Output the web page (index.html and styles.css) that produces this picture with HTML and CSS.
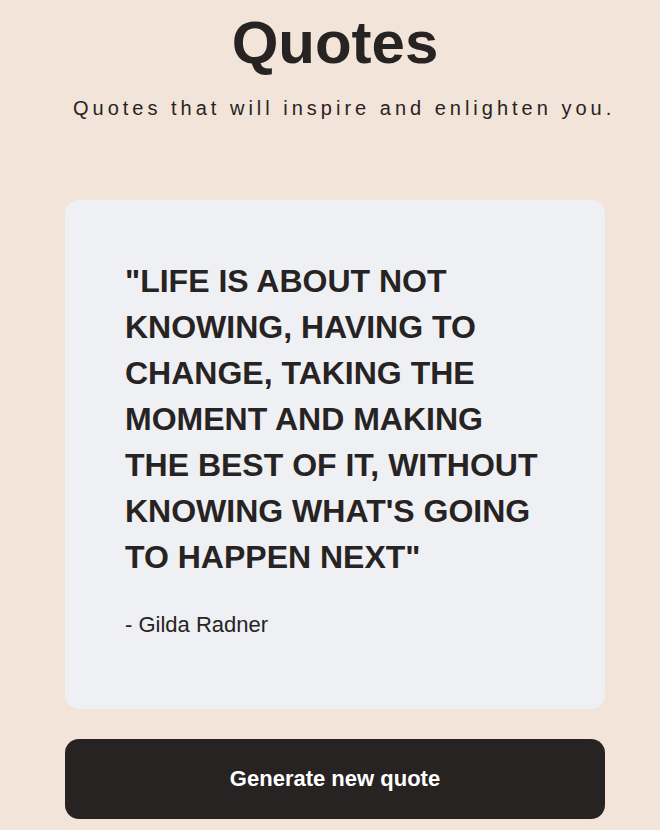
FILE: index.html
```html
<!DOCTYPE html>
<html lang="en">
<head>
  <meta charset="utf-8">
  <meta name="viewport" content="width=device-width, initial-scale=1">
  <title>Quotes</title>
  <link rel="stylesheet" href="styles.css">
</head>
<body>
  <main class="page">
    <header class="header">
      <h1 class="title">Quotes</h1>
      <p class="subtitle">Quotes that will inspire and enlighten you.</p>
    </header>
    <figure class="card">
      <blockquote class="quote">"Life is about not knowing, having to change, taking the moment and making the best of it, without knowing what's going to happen next"</blockquote>
      <figcaption class="author">- Gilda Radner</figcaption>
    </figure>
    <button class="generate" type="button">Generate new quote</button>
  </main>
</body>
</html>
```

FILE: styles.css
```css
* {
  box-sizing: border-box;
  margin: 0;
}

body {
  background: #f2e4d8;
  color: #272323;
  font-family: "Liberation Sans", Arial, sans-serif;
}

.page {
  display: flex;
  flex-direction: column;
  max-width: 680px;
  padding: 8px 55px 10px 65px;
}

.header {
  text-align: center;
}

.title {
  font-size: 60px;
  line-height: 70px;
}

.subtitle {
  margin-top: 18px;
  padding-left: 8px;
  font-size: 20px;
  line-height: 24px;
  letter-spacing: 4px;
  white-space: nowrap;
}

.card {
  margin-top: 80px;
  padding: 58px 60px 71px;
  border-radius: 14px;
  background: #eff0f4;
}

.quote {
  font-size: 32px;
  font-weight: 700;
  line-height: 46px;
  text-transform: uppercase;
}

.author {
  margin-top: 32px;
  font-size: 22px;
  line-height: 26px;
}

.generate {
  margin-top: 30px;
  height: 80px;
  border: 0;
  border-radius: 14px;
  background: #272323;
  color: #fff;
  font: 700 22px "Liberation Sans", Arial, sans-serif;
  cursor: pointer;
}
```
